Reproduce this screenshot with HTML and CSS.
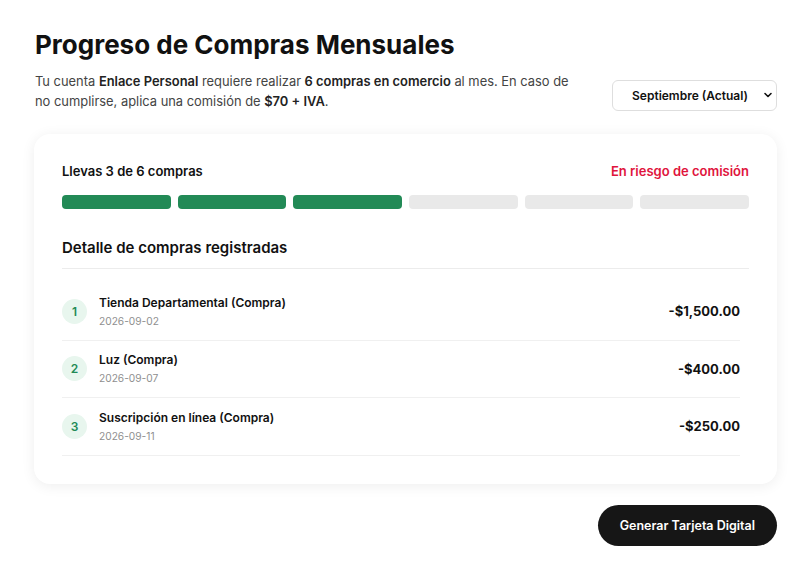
FILE: index.html
```html
<!DOCTYPE html>
<html lang="es">
<head>
<meta charset="utf-8">
<title>Progreso de Compras Mensuales</title>
<link rel="stylesheet" href="styles.css">
</head>
<body>
<main class="page">
  <h1 class="title">Progreso de Compras Mensuales</h1>
  <div class="intro">
    <p class="desc">Tu cuenta <strong>Enlace Personal</strong> requiere realizar <strong>6 compras en comercio</strong> al mes. En caso de no cumplirse, aplica una comisión de <strong>$70 + IVA</strong>.</p>
    <div class="select-wrap">
      <select class="month">
        <option>Septiembre (Actual)</option>
        <option>Agosto</option>
        <option>Julio</option>
      </select>
      <svg class="chev" width="10" height="10" viewBox="0 0 10 10" aria-hidden="true"><path d="M2 3.5 L5 6.5 L8 3.5" fill="none" stroke="#111" stroke-width="1.6" stroke-linecap="round" stroke-linejoin="round"/></svg>
    </div>
  </div>

  <section class="card">
    <div class="status">
      <span class="count">Llevas 3 de 6 compras</span>
      <span class="risk">En riesgo de comisión</span>
    </div>
    <div class="bars">
      <span class="bar done"></span>
      <span class="bar done"></span>
      <span class="bar done"></span>
      <span class="bar"></span>
      <span class="bar"></span>
      <span class="bar"></span>
    </div>
    <h2 class="subtitle">Detalle de compras registradas</h2>
    <ul class="list">
      <li class="row">
        <span class="num">1</span>
        <div class="info">
          <span class="name">Tienda Departamental (Compra)</span>
          <span class="date">2026-09-02</span>
        </div>
        <span class="amount">-$1,500.00</span>
      </li>
      <li class="row">
        <span class="num">2</span>
        <div class="info">
          <span class="name">Luz (Compra)</span>
          <span class="date">2026-09-07</span>
        </div>
        <span class="amount">-$400.00</span>
      </li>
      <li class="row">
        <span class="num">3</span>
        <div class="info">
          <span class="name">Suscripción en línea (Compra)</span>
          <span class="date">2026-09-11</span>
        </div>
        <span class="amount">-$250.00</span>
      </li>
    </ul>
  </section>

  <div class="actions">
    <button class="cta">Generar Tarjeta Digital</button>
  </div>
</main>
</body>
</html>
```
FILE: styles.css
```css
* { box-sizing: border-box; }
html, body { margin: 0; background: #fff; }
body {
  font-family: Inter, "Noto Sans", "Liberation Sans", sans-serif;
  color: #111;
}
.page {
  padding: 28px 27px 0 34px;
  width: 804px;
}
.title {
  margin: 0 0 0 1px;
  font-size: 26px;
  font-weight: 700;
  letter-spacing: 0;
  line-height: 34px;
  color: #111;
}
.intro {
  display: flex;
  align-items: flex-end;
  justify-content: space-between;
  margin-top: 10px;
}
.desc {
  margin: 0 0 0 1px;
  width: 545px;
  font-size: 12.9px;
  line-height: 19.5px;
  color: #444;
}
.desc strong { color: #222; font-weight: 600; }
.select-wrap {
  position: relative;
  width: 165px;
  height: 31px;
}
.month {
  appearance: none;
  -webkit-appearance: none;
  width: 100%;
  height: 100%;
  border: 1px solid #dedede;
  border-radius: 6px;
  background: #fff;
  font-family: inherit;
  font-size: 12px;
  font-weight: 600;
  color: #111;
  padding: 0 0 0 19px;
}
.chev {
  position: absolute;
  right: 4px;
  top: 10px;
  pointer-events: none;
}
.card {
  margin-top: 23px;
  background: #fff;
  border-radius: 16px;
  box-shadow: 0 2px 14px rgba(0,0,0,0.07);
  padding: 28px 28px 28px 28px;
  width: 743px;
}
.status {
  display: flex;
  justify-content: space-between;
  align-items: center;
  font-size: 13px;
  font-weight: 600;
  line-height: 18px;
}
.count { color: #111; }
.risk { color: #e0143c; }
.bars {
  display: flex;
  gap: 7px;
  margin-top: 15px;
}
.bar {
  flex: 1;
  height: 14px;
  border-radius: 4px;
  background: #e9e9e9;
}
.bar.done { background: #228a56; }
.subtitle {
  margin: 29px 0 0 0;
  padding-bottom: 10px;
  border-bottom: 1px solid #ececec;
  font-size: 15px;
  font-weight: 600;
  line-height: 20px;
  color: #111;
}
.list {
  list-style: none;
  margin: 14px 9px 0 0;
  padding: 0;
}
.row {
  display: flex;
  align-items: center;
  height: 57.5px;
  border-bottom: 1px solid #f0f0f0;
}
.num {
  width: 25px;
  height: 25px;
  border-radius: 50%;
  background: #e8f6ee;
  color: #228a56;
  font-size: 12px;
  font-weight: 600;
  display: flex;
  align-items: center;
  justify-content: center;
  flex: none;
}
.info {
  display: flex;
  flex-direction: column;
  margin-left: 12px;
  flex: 1;
  gap: 3px;
}
.name {
  font-size: 12px;
  font-weight: 600;
  line-height: 16px;
  color: #111;
}
.date {
  font-size: 10.2px;
  line-height: 14px;
  color: #8f8f8f;
}
.amount {
  font-size: 13px;
  font-weight: 700;
  color: #111;
}
.actions {
  display: flex;
  justify-content: flex-end;
  margin-top: 21px;
}
.cta {
  height: 41px;
  padding: 0 22px;
  border: none;
  border-radius: 21px;
  background: #161616;
  color: #fff;
  font-family: inherit;
  font-size: 12.5px;
  font-weight: 600;
  white-space: nowrap;
  min-width: 178px;
}
```
